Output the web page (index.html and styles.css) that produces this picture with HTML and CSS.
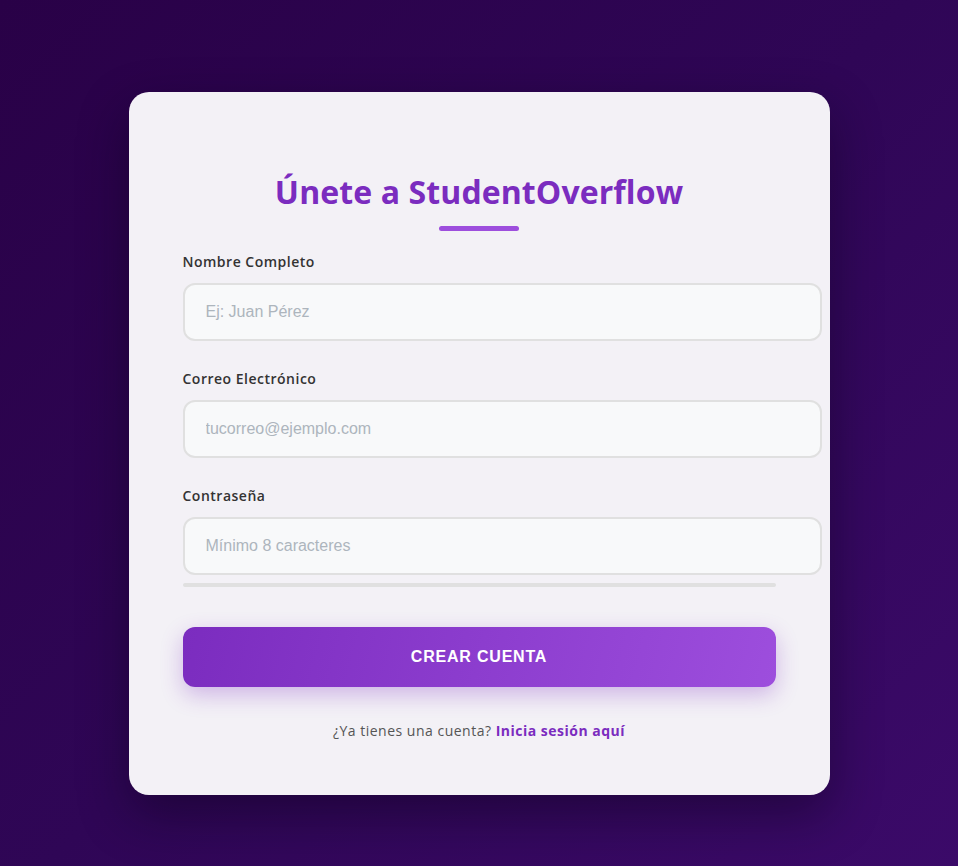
FILE: index.html
```html
<!DOCTYPE html>
<html lang="es">
<head>
<meta charset="utf-8">
<title>Registro - StudentOverflow</title>
<link rel="stylesheet" href="styles.css">
</head>
<body>
<div class="card">
  <h2 class="title">Únete a StudentOverflow</h2>
  <div class="title-bar"></div>
  <form class="form">
    <div class="group">
      <label class="label">Nombre Completo</label>
      <input class="input" type="text" placeholder="Ej: Juan Pérez">
    </div>
    <div class="group">
      <label class="label">Correo Electrónico</label>
      <input class="input" type="email" placeholder="tucorreo@ejemplo.com">
    </div>
    <div class="group group-last">
      <label class="label">Contraseña</label>
      <input class="input" type="password" placeholder="Mínimo 8 caracteres">
      <div class="strength"></div>
    </div>
    <button class="btn" type="button">CREAR CUENTA</button>
  </form>
  <p class="footer">¿Ya tienes una cuenta? <a class="link" href="#">Inicia sesión aquí</a></p>
</div>
</body>
</html>
```
FILE: styles.css
```css
html, body {
  margin: 0;
  height: 100%;
}
body {
  background: linear-gradient(135deg, #290147 0%, #2f0656 50%, #3b0a69 100%);
  font-family: "Open Sans", "DejaVu Sans", sans-serif;
  display: flex;
  justify-content: center;
  align-items: flex-start;
  padding-top: 92px;
  box-sizing: border-box;
}
.card {
  box-sizing: border-box;
  width: 701px;
  height: 703px;
  padding: 78px 54px 0;
  background: #f3f1f6;
  border-radius: 20px;
  box-shadow: 0 20px 50px rgba(10, 0, 25, 0.45);
}
.title {
  margin: 0;
  text-align: center;
  font-size: 32px;
  line-height: 44px;
  font-weight: 700;
  color: #7b2cbf;
  letter-spacing: 0.1px;
}
.title-bar {
  width: 80px;
  height: 5px;
  border-radius: 3px;
  background: #9d4edd;
  margin: 12px auto 0;
}
.form {
  margin-top: 20px;
}
.group {
  margin-bottom: 27px;
}
.group-last {
  margin-bottom: 0;
}
.label {
  display: block;
  font-size: 14px;
  line-height: 21px;
  font-weight: 560;
  letter-spacing: 0.5px;
  color: #333;
  margin-bottom: 11px;
}
.input {
  display: block;
  width: 100%;
  height: 20px;
  padding: 17px 21px;
  border: 2px solid #e0e0e0;
  border-radius: 12px;
  background: #f8f9fa;
  font-family: "Liberation Sans", Arial, sans-serif;
  font-size: 16px;
  color: #333;
  outline: none;
}
.input::placeholder {
  color: #adb5bd;
}
.strength {
  height: 4px;
  margin-top: 8px;
  border-radius: 2px;
  background: #e0e0e0;
}
.btn {
  display: block;
  width: 100%;
  height: 60px;
  margin-top: 40px;
  border: none;
  border-radius: 12px;
  background: linear-gradient(105deg, #7b2cbf 0%, #9d4edd 100%);
  color: #fff;
  font-family: "Liberation Sans", Arial, sans-serif;
  font-size: 16px;
  font-weight: 700;
  letter-spacing: 0.8px;
  box-shadow: 0 8px 22px rgba(123, 44, 191, 0.3);
  cursor: pointer;
}
.footer {
  margin: 33px 0 0;
  text-align: center;
  font-size: 14px;
  line-height: 21px;
  letter-spacing: 0.5px;
  color: #555;
}
.link {
  color: #7b2cbf;
  font-weight: 700;
  text-decoration: none;
}
```
